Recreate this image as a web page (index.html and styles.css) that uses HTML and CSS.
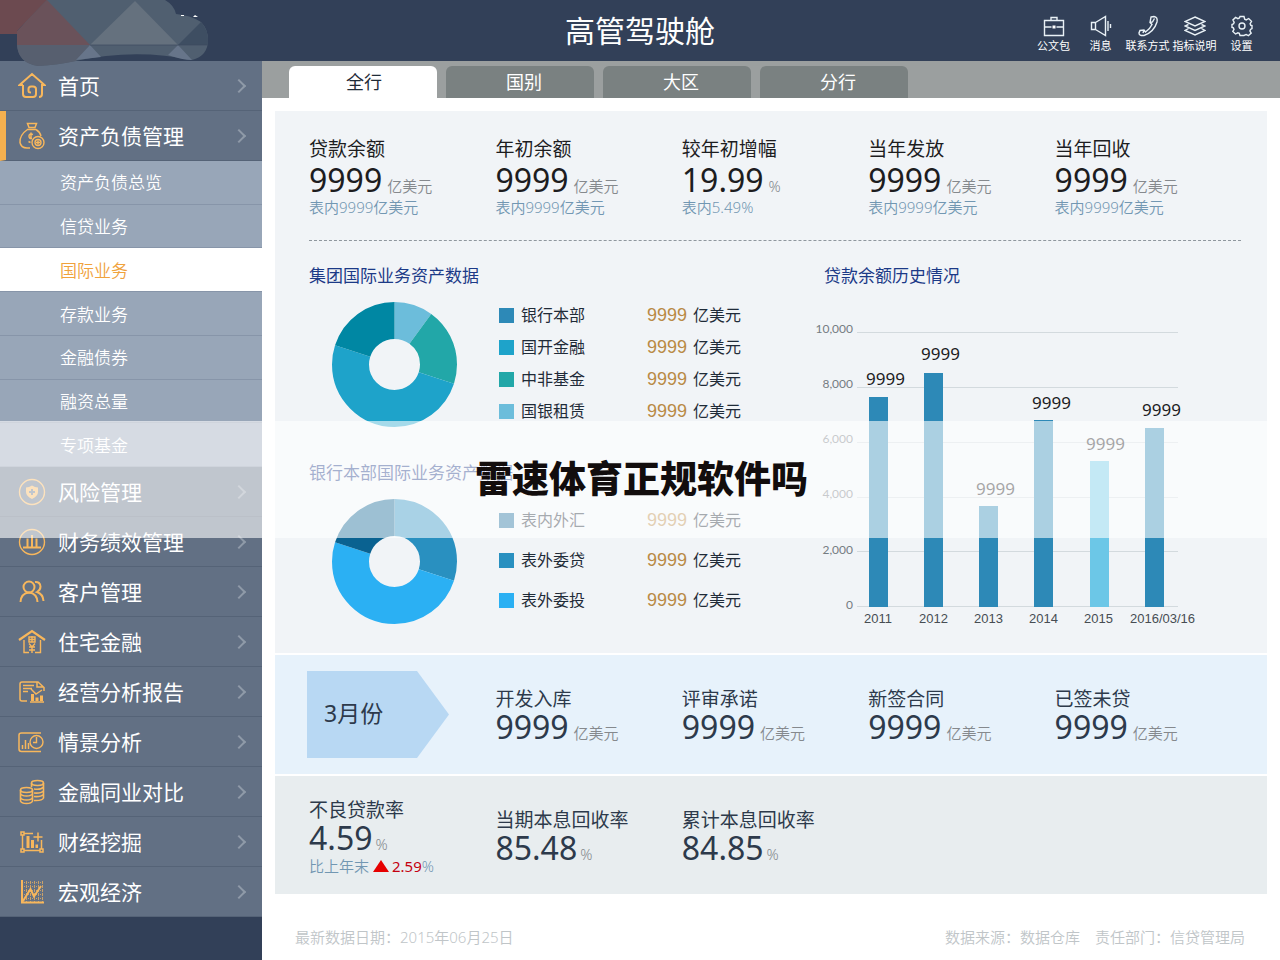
FILE: index.html
```html
<!DOCTYPE html>
<html lang="zh-CN">
<head>
<meta charset="utf-8">
<meta name="viewport" content="width=device-width, initial-scale=1">
<title>高管驾驶舱</title>
<link rel="stylesheet" href="styles.css">
</head>
<body>
<div class="app">
  <header class="header">
    <svg class="logo" viewBox="0 0 210 68" width="210" height="68" aria-hidden="true">
      <path fill="#505f70" d="M40 0H165Q174 5 176 14Q190 15 201 22Q208 29 208 40Q208 56 192 60Q135 48 75 61Q58 65 38 66Q17 63 17 42V34Z"/>
      <path fill="#575f6f" d="M17 45H90L76 61Q58 65 38 66Q18 63 17 45Z"/>
      <path fill="#6c4a50" d="M0 0H47L17 31V34H0Z"/>
      <path fill="#6a525a" d="M47 0L90 45H17V31Z"/>
      <path fill="#65717e" d="M135 1L178 45H90Z"/>
      <path fill="#3e4e62" d="M201 22L178 45H208Q209 30 201 22Z"/>
      <path fill="#67758a" d="M90 45L76 60L101 57ZM178 45L168 55Q182 60 192 60Z"/>
      <path fill="none" stroke="#3d4b60" stroke-width=".7" d="M90 45H208"/>
      <path fill="#fff" d="M181 15h3v1h-3zM193 17l2-2 3 2z"/>
    </svg>
    <h1 class="header-title">高管驾驶舱</h1>
    <nav class="tools">
      <button class="tool" type="button">
        <svg viewBox="0 0 22 22"><path d="M1.500 5.500h19v15h-19zM8 5V2.500h6V5M1.500 12h7M13.500 12h7"/><path class="solid" d="M9.500 10.500h3v3h-3z"/></svg>公文包</button>
      <button class="tool" type="button">
        <svg viewBox="0 0 22 22"><path d="M1.500 7.500h4v7h-4zM5.500 7.500L15.500 1.500v19L5.500 14.500M18 6v10M20.500 9v4"/></svg>消息</button>
      <button class="tool" type="button">
        <svg viewBox="0 0 22 22"><path d="M14 2L17 1.500Q21 2 20 7Q17 17 7 20.500Q2 21 2 18L3 15.500L7 15L8.500 17Q13 14 15 9.500L13 7.500ZM13 7.500L15.500 7L17.500 3.500M7 15L6 18"/></svg>联系方式</button>
      <button class="tool" type="button">
        <svg viewBox="0 0 22 22"><path d="M11 2L21 6.500L11 11L1 6.500ZM4.500 9.500L1 11L11 15.500L21 11L17.500 9.500M4.500 13.500L1 15.500L11 20L21 15.500L17.500 13.500"/></svg>指标说明</button>
      <button class="tool" type="button">
        <svg viewBox="0 0 22 22"><circle cx="11" cy="11" r="3"/><path d="M9 1.500h4l.7 2.700 1.500.7 2.500-1.400 2.800 2.800-1.400 2.500.7 1.500 1.200.2v3l-1.500.9-.6 1.500 1.300 2.200-2.800 2.600-2.300-1.200-1.500.6L13 20.500H9l-.7-2.100-1.500-.6-2.300 1.200-2.700-2.600L3 14.400l-.6-1.500L1 12.500V9.500l1.600-.7.6-1.500-1.300-2.300 2.700-2.600 2.300 1.300 1.500-.7Z"/></svg>设置</button>
    </nav>
  </header>

  <div class="body">
    <aside class="sidebar">
      <nav>
        <ul class="menu">
          <li><a class="item" href="#"><svg class="icon" viewBox="0 0 28 28"><path stroke-width="2" d="M5 13H1.500L14 2L26.500 13H24V22Q24 25 21 25M5 13V22Q5 25 8 25H15Q18 25 18 22V17Q18 14.500 15 14.500H13Q10.500 14.500 10.500 17V19Q10.500 20.500 13 20.500"/></svg><span>首页</span><i class="chevron"></i></a></li>
          <li><a class="item item-open" href="#"><svg class="icon" viewBox="0 0 28 28"><path stroke-width="1.500" d="M9.500 1.500h9l-1.500 4h-6ZM9 7.500h9M9.500 7.500Q1.500 13 2 20.500Q3 26 9 26H12M18 7.500Q22 10 23 14M15 12.500Q11 11 11 14T14 16.500M13 10.500v6M10.500 19.500l2 1"/><circle cx="20" cy="20.500" r="6"/><circle cx="20" cy="20.500" r="3"/><path d="M18 20.500h4M20 18.500v4"/></svg><span>资产负债管理</span><i class="chevron"></i></a>
            <ul class="submenu">
              <li><a href="#">资产负债总览</a></li>
              <li><a href="#">信贷业务</a></li>
              <li><a class="current" href="#" aria-current="page">国际业务</a></li>
              <li><a href="#">存款业务</a></li>
              <li><a href="#">金融债券</a></li>
              <li><a href="#">融资总量</a></li>
              <li><a href="#">专项基金</a></li>
            </ul>
          </li>
          <li><a class="item" href="#"><svg class="icon" viewBox="0 0 28 28"><circle cx="14" cy="14" r="12.500"/><path class="fill" d="M14 7.500Q17 9.500 20 9.500V14Q20 18 14 21Q8 18 8 14V9.500Q11 9.500 14 7.500Z"/><path stroke="#627084" stroke-width="2" d="M11 14h6M14 11v6"/></svg><span>风险管理</span><i class="chevron"></i></a></li>
          <li><a class="item" href="#"><svg class="icon" viewBox="0 0 28 28"><circle cx="14" cy="14" r="12.500"/><path stroke-width="2" d="M5 19.500h18M9.500 19V10.500M14 19V7M18.500 19V10.500"/></svg><span>财务绩效管理</span><i class="chevron"></i></a></li>
          <li><a class="item" href="#"><svg class="icon" viewBox="0 0 28 28"><g stroke-width="2"><circle cx="11" cy="9" r="5.500"/><path d="M2.500 24Q3 15.500 11 14.500Q19 15.500 19.500 24M17 4Q22 3.500 22.500 8.500Q22.500 12 19 14Q25 16 25.500 23"/></g></svg><span>客户管理</span><i class="chevron"></i></a></li>
          <li><a class="item" href="#"><svg class="icon" viewBox="0 0 28 28"><path stroke-width="2.200" d="M1 12L14 3L27 12"/><path d="M6 12V24.500H11M17 24.500H22.500V12M11 9h6v5h-6zM14 8v6M11 11.500h6M11 15.500l3 3.500 3-3.500M14 19v6M11 19h6M11 22h6"/></svg><span>住宅金融</span><i class="chevron"></i></a></li>
          <li><a class="item" href="#"><svg class="icon" viewBox="0 0 28 28"><path stroke-width="1.500" d="M9 23H4Q2 23 2 21V6Q2 4 4 4H20L26 9.500V13M19 4V9H25"/><path d="M5 7.500h11M5 10.500h9M5 13.500h5M13 11l5 5 6-4M12 24h14"/><path class="fill" d="M13 16h3v7h-3zM17.500 19.500h3V23h-3zM22 17.500h3V23h-3z"/></svg><span>经营分析报告</span><i class="chevron"></i></a></li>
          <li><a class="item" href="#"><svg class="icon" viewBox="0 0 28 28"><path stroke-width="1.500" d="M23 5H3.500Q1 5 1 7V21Q1 23.500 3.500 23.500H23"/><path stroke-width="1.500" d="M4.500 21V17M7.500 21V12M10.500 21V15"/><circle cx="18.500" cy="14" r="6.500"/><path d="M18.500 9V14.500H15"/></svg><span>情景分析</span><i class="chevron"></i></a></li>
          <li><a class="item" href="#"><svg class="icon" viewBox="0 0 28 28"><g stroke-width="1.600"><ellipse cx="19.500" cy="5" rx="6" ry="2.500"/><path d="M13.500 5V9M25.500 5V20Q24 23 16 22.500M25.500 9Q23 12 16 11M25.500 13Q23 15.500 16 15M25.500 16.500Q23 19 16 18.500"/><ellipse cx="8.500" cy="12" rx="6" ry="2.500"/><path d="M2.500 12V23Q3.500 25.500 8.500 25.500T14.500 23V12M2.500 15.500Q3.500 18 8.500 18T14.500 15.500M2.500 19.500Q3.500 22 8.500 22T14.500 19.500"/></g></svg><span>金融同业对比</span><i class="chevron"></i></a></li>
          <li><a class="item" href="#"><svg class="icon" viewBox="0 0 28 28"><path stroke-width="1.500" d="M3 4h3v3H3zM3 21h3v3H3zM22 21h3v3h-3zM4.500 7V21M6 22.500H22M6 5.500h9M23.500 12V21M15.500 9h9M20 4.500v9"/><path class="fill" d="M8.500 8h3v12h-3zM13 12h3v8h-3zM17.500 16.500h2.500V20h-2.500z"/></svg><span>财经挖掘</span><i class="chevron"></i></a></li>
          <li><a class="item" href="#"><svg class="icon" viewBox="0 0 28 28"><path stroke-width="1" opacity=".7" stroke-dasharray="1 1" d="M8.500 3V24M12.500 3V24M16.500 3V24M20.500 3V24M24.500 3V24M4 4.500H26M4 8.500H26M4 12.500H26M4 16.500H26M4 20.500H26"/><path stroke-width="2" d="M4 2V24.500H26M5 23L12.500 11L16 18.500L23 8"/></svg><span>宏观经济</span><i class="chevron"></i></a></li>
        </ul>
      </nav>
    </aside>

    <main class="main">
      <div class="tabs" role="tablist">
        <button class="tab tab-active" role="tab" aria-selected="true" type="button">全行</button>
        <button class="tab" role="tab" aria-selected="false" type="button">国别</button>
        <button class="tab" role="tab" aria-selected="false" type="button">大区</button>
        <button class="tab" role="tab" aria-selected="false" type="button">分行</button>
      </div>

      <div class="panels">
        <section class="panel overview">
          <div class="columns kpis">
            <div class="kpi"><h2>贷款余额</h2><p class="figure">9999<small>亿美元</small></p><p class="note">表内9999亿美元</p></div>
            <div class="kpi"><h2>年初余额</h2><p class="figure">9999<small>亿美元</small></p><p class="note">表内9999亿美元</p></div>
            <div class="kpi"><h2>较年初增幅</h2><p class="figure">19.99<small>%</small></p><p class="note">表内5.49%</p></div>
            <div class="kpi"><h2>当年发放</h2><p class="figure">9999<small>亿美元</small></p><p class="note">表内9999亿美元</p></div>
            <div class="kpi"><h2>当年回收</h2><p class="figure">9999<small>亿美元</small></p><p class="note">表内9999亿美元</p></div>
          </div>

          <div class="charts">
            <div class="shares">
              <section>
                <h3>集团国际业务资产数据</h3>
                <div class="share">
                  <svg class="donut" viewBox="0 0 125 125" role="img" aria-label="集团国际业务资产数据">
                    <circle cx="62.500" cy="62.500" r="44" pathLength="100" stroke="#6cbddb" stroke-dasharray="10 90"/>
                    <circle cx="62.500" cy="62.500" r="44" pathLength="100" stroke="#22a7a8" stroke-dasharray="20 80" stroke-dashoffset="-10"/>
                    <circle cx="62.500" cy="62.500" r="44" pathLength="100" stroke="#1ea3ca" stroke-dasharray="50 50" stroke-dashoffset="-30"/>
                    <circle cx="62.500" cy="62.500" r="44" pathLength="100" stroke="#0087a3" stroke-dasharray="20 80" stroke-dashoffset="-80"/>
                  </svg>
                  <ul class="legend">
                    <li><i class="swatch c-blue"></i><span class="name">银行本部</span><b>9999</b>亿美元</li>
                    <li><i class="swatch c-cyan"></i><span class="name">国开金融</span><b>9999</b>亿美元</li>
                    <li><i class="swatch c-green"></i><span class="name">中非基金</span><b>9999</b>亿美元</li>
                    <li><i class="swatch c-light"></i><span class="name">国银租赁</span><b>9999</b>亿美元</li>
                  </ul>
                </div>
              </section>
              <section>
                <h3>银行本部国际业务资产数据</h3>
                <div class="share">
                  <svg class="donut" viewBox="0 0 125 125" role="img" aria-label="银行本部国际业务资产数据">
                    <circle cx="62.500" cy="62.500" r="44" pathLength="100" stroke="#2990c0" stroke-dasharray="30 70"/>
                    <circle cx="62.500" cy="62.500" r="44" pathLength="100" stroke="#2bb0f3" stroke-dasharray="50 50" stroke-dashoffset="-30"/>
                    <circle cx="62.500" cy="62.500" r="44" pathLength="100" stroke="#0a6291" stroke-dasharray="20 80" stroke-dashoffset="-80"/>
                  </svg>
                  <ul class="legend legend-loose">
                    <li><i class="swatch c-navy"></i><span class="name">表内外汇</span><b>9999</b>亿美元</li>
                    <li><i class="swatch c-mid"></i><span class="name">表外委贷</span><b>9999</b>亿美元</li>
                    <li><i class="swatch c-sky"></i><span class="name">表外委投</span><b>9999</b>亿美元</li>
                  </ul>
                </div>
              </section>
            </div>

            <section class="history">
              <h3>贷款余额历史情况</h3>
              <svg class="bars" viewBox="0 0 426 340" role="img" aria-label="贷款余额历史情况">
                <path class="grid" d="M42 44.500H363M42 99.500H363M42 154.500H363M42 209.500H363M42 263.500H363M42 318.500H363"/>
                <g class="axis-y">
                  <text x="38" y="45">10,000</text><text x="38" y="100">8,000</text><text x="38" y="155">6,000</text>
                  <text x="38" y="210">4,000</text><text x="38" y="266">2,000</text><text x="38" y="321">0</text>
                </g>
                <g fill="#2d89b7">
                  <rect x="54" y="109" width="19" height="210"/>
                  <rect x="109" y="85" width="19" height="234"/>
                  <rect x="164" y="218" width="19" height="101"/>
                  <rect x="219" y="132" width="19" height="187"/>
                  <rect x="275" y="173" width="19" height="146" fill="#6cc7e7"/>
                  <rect x="330" y="140" width="19" height="179"/>
                </g>
                <g class="values">
                  <text x="51" y="97">9999</text><text x="106" y="72">9999</text><text x="161" y="207">9999</text>
                  <text x="217" y="121">9999</text><text x="271" y="162">9999</text><text x="327" y="128">9999</text>
                </g>
                <g class="axis-x">
                  <text x="49" y="335">2011</text><text x="104" y="335">2012</text><text x="159" y="335">2013</text>
                  <text x="214" y="335">2014</text><text x="269" y="335">2015</text><text x="315" y="335">2016/03/16</text>
                </g>
              </svg>
            </section>
          </div>
        </section>

        <section class="panel month columns">
          <div class="arrow">3月份</div>
          <div class="kpi"><h2>开发入库</h2><p class="figure">9999<small>亿美元</small></p></div>
          <div class="kpi"><h2>评审承诺</h2><p class="figure">9999<small>亿美元</small></p></div>
          <div class="kpi"><h2>新签合同</h2><p class="figure">9999<small>亿美元</small></p></div>
          <div class="kpi"><h2>已签未贷</h2><p class="figure">9999<small>亿美元</small></p></div>
        </section>

        <section class="panel rates columns">
          <div class="kpi"><h2>不良贷款率</h2><p class="figure">4.59<small>%</small></p><p class="note trend">比上年末<i class="up"></i><em>2.59</em>%</p></div>
          <div class="kpi"><h2>当期本息回收率</h2><p class="figure">85.48<small>%</small></p></div>
          <div class="kpi"><h2>累计本息回收率</h2><p class="figure">84.85<small>%</small></p></div>
        </section>
      </div>

      <footer class="footer">
        <span>最新数据日期：2015年06月25日</span>
        <span class="source">数据来源：数据仓库</span>
        <span>责任部门：信贷管理局</span>
      </footer>
    </main>
  </div>

  <div class="banner">雷速体育正规软件吗</div>
</div>
</body>
</html>
```

FILE: styles.css
```css
* { box-sizing: border-box; }

body, h1, h2, h3, p, ul { margin: 0; padding: 0; }
ul { list-style: none; }
i, em { font-style: normal; }
a { color: inherit; text-decoration: none; }
button { border: 0; background: none; color: inherit; font: inherit; padding: 0; cursor: pointer; }

body {
  background: #fff;
  color: #1f2b38;
  font-family: "Noto Sans", "Noto Sans CJK SC", sans-serif;
  font-size: 16px;
}

.app { position: relative; display: flex; flex-direction: column; min-height: 100vh; }

/* Header */
.header {
  position: relative;
  display: grid;
  grid-template-columns: 1fr auto 1fr;
  align-items: center;
  height: 61px;
  background: #324058;
  color: #fff;
}
.logo { position: absolute; left: 0; top: 0; z-index: 1; }
.header-title { grid-column: 2; font-size: 30px; line-height: 40px; font-weight: 400; }
.tools { display: flex; justify-content: flex-end; padding-right: 15px; }
.tool {
  display: flex;
  flex-direction: column;
  align-items: center;
  gap: 1px;
  width: 47px;
  padding-top: 8px;
  font-size: 11px;
  line-height: 16px;
  white-space: nowrap;
}
.tool svg { width: 22px; height: 22px; fill: none; stroke: #e9f1f6; stroke-width: 1.4; }
.tool .solid { fill: #fff; stroke: none; }

.body { display: flex; flex: 1; }

/* Sidebar */
.sidebar { flex: 0 0 262px; background: #324058; color: #fff; }
.item {
  display: flex;
  align-items: center;
  gap: 12px;
  height: 50px;
  padding: 0 16px 0 18px;
  background: #627084;
  border-bottom: 1px solid #556377;
  font-size: 21px;
  line-height: 24px;
}
.item-open { padding-left: 12px; border-left: 6px solid #f5b04f; }
.icon { width: 28px; height: 28px; fill: none; stroke: #f8b75c; stroke-width: 1.4; }
.icon .fill { fill: #f8b75c; stroke: none; }
.chevron {
  width: 10px;
  height: 10px;
  margin: 0 2px 0 auto;
  border: solid #8f9aa8;
  border-width: 2px 2px 0 0;
  transform: rotate(45deg);
}
.submenu { display: flex; flex-direction: column; height: 306px; }
.submenu li { flex: 1; display: flex; }
.submenu a {
  flex: 1;
  display: flex;
  align-items: center;
  padding-top: 2px;
  padding-left: 60px;
  background: #98a6b8;
  border-bottom: 1px solid #8795a9;
  font-size: 17px;
  line-height: 24px;
  font-weight: 350;
}
.submenu .current { background: #fff; color: #f0a23c; }

/* Tabs */
.main { flex: 1; min-width: 0; display: flex; flex-direction: column; }
.tabs {
  display: flex;
  gap: 9px;
  height: 37px;
  padding: 5px 0 0 27px;
  background: #9b9f9f;
}
.tab {
  flex: 0 0 148px;
  padding-left: 8px;
  border-radius: 6px 6px 0 0;
  background: #7a8181;
  color: #fff;
  font-size: 18px;
  line-height: 30px;
}
.tab-active { padding-left: 2px; background: #fff; color: #1f2b38; }

/* Panels */
.panels { display: flex; flex-direction: column; gap: 2px; padding: 13px 13px 0; }
.panel { padding: 0 26px 0 34px; }
.columns { display: grid; grid-template-columns: repeat(5, minmax(0, 1fr)); }

.kpi { white-space: nowrap; }
.kpi h2 { font-size: 19px; line-height: 24px; font-weight: 400; }
.figure { height: 32px; font-size: 32px; line-height: 32px; }
.figure small { margin-left: 5px; color: #85898d; font-size: 15px; line-height: 16px; font-weight: 350; }
.note { color: #7297b2; font-size: 15px; line-height: 20px; font-weight: 350; }

.overview { padding-top: 26px; padding-bottom: 25px; background: #f1f4f7; }
.kpis { padding-bottom: 23px; border-bottom: 1px dashed #8f979e; color: #1d1d1f; }
.kpis .figure { margin: 3px 0 1px; }

.charts { display: grid; grid-template-columns: minmax(0, 1fr) 426px; padding-top: 23px; }
.charts h3 { color: #1c3a87; font-size: 17px; line-height: 24px; font-weight: 400; }
.shares { display: flex; flex-direction: column; gap: 34px; }
.share {
  display: flex;
  align-items: flex-end;
  gap: 42px;
  min-height: 128px;
  margin-top: 11px;
  padding-left: 23px;
}
.donut { width: 125px; height: 125px; transform: rotate(-90deg); fill: none; stroke-width: 37px; }
.legend li { display: flex; align-items: center; height: 32px; line-height: 24px; white-space: nowrap; }
.legend-loose { align-self: center; }
.legend-loose li { height: 40px; }
.swatch { width: 15px; height: 15px; margin-right: 7px; }
.name { width: 126px; }
.legend b { margin-right: 6px; color: #b98a45; font-family: "Liberation Sans", sans-serif; font-size: 18px; font-weight: 400; }
.c-blue { background: #2d89b7; }
.c-cyan { background: #1ea3ca; }
.c-green { background: #22a7a8; }
.c-light { background: #6cbddb; }
.c-navy { background: #1b6d9c; }
.c-mid { background: #2990c0; }
.c-sky { background: #2bb0f3; }

.history h3 { padding-left: 9px; }
.bars { display: block; width: 100%; overflow: visible; }
.grid { stroke: #d3dade; }
.axis-y { fill: #757c82; font-family: Lato, sans-serif; font-size: 12px; text-anchor: end; }
.axis-x { fill: #474d53; font-family: "Liberation Sans", sans-serif; font-size: 13px; }
.values { fill: #1d1d1f; font-size: 17px; }

.month { align-items: center; padding-top: 16px; padding-bottom: 16px; background: #e7f2fb; color: #2d3a4b; }
.arrow {
  width: 142px;
  height: 87px;
  margin-left: -2px;
  padding-left: 17px;
  background: #b8d8f3;
  clip-path: polygon(0 0, 110px 0, 100% 50%, 110px 100%, 0 100%);
  font-size: 23px;
  line-height: 84px;
}
.rates { align-items: center; min-height: 118px; padding-top: 4px; background: #e8edef; color: #2d3a4b; }
.rates small { margin-left: 3px; }
.rates .figure { margin-bottom: 2px; }
.trend { display: flex; align-items: center; }
.up { margin: 0 3px 0 4px; border: solid transparent; border-width: 0 8px 12px; border-bottom-color: #e60000; }
.trend em { color: #c4000f; font-weight: 400; }

.footer {
  display: flex;
  gap: 15px;
  padding: 31px 35px 10px 33px;
  color: #c0c5c8;
  font-size: 15px;
  line-height: 24px;
  font-weight: 350;
}
.source { margin-left: auto; }

/* Translucent strip laid over the dashboard */
.banner {
  position: absolute;
  top: 421px;
  left: 0;
  right: 0;
  display: flex;
  align-items: center;
  justify-content: center;
  height: 117px;
  padding: 0 0 6px 3px;
  background: rgba(255, 255, 255, 0.6);
  color: #120d0d;
  font-family: "Noto Sans CJK SC", sans-serif;
  font-size: 37px;
  font-weight: 900;
  pointer-events: none;
}
```
